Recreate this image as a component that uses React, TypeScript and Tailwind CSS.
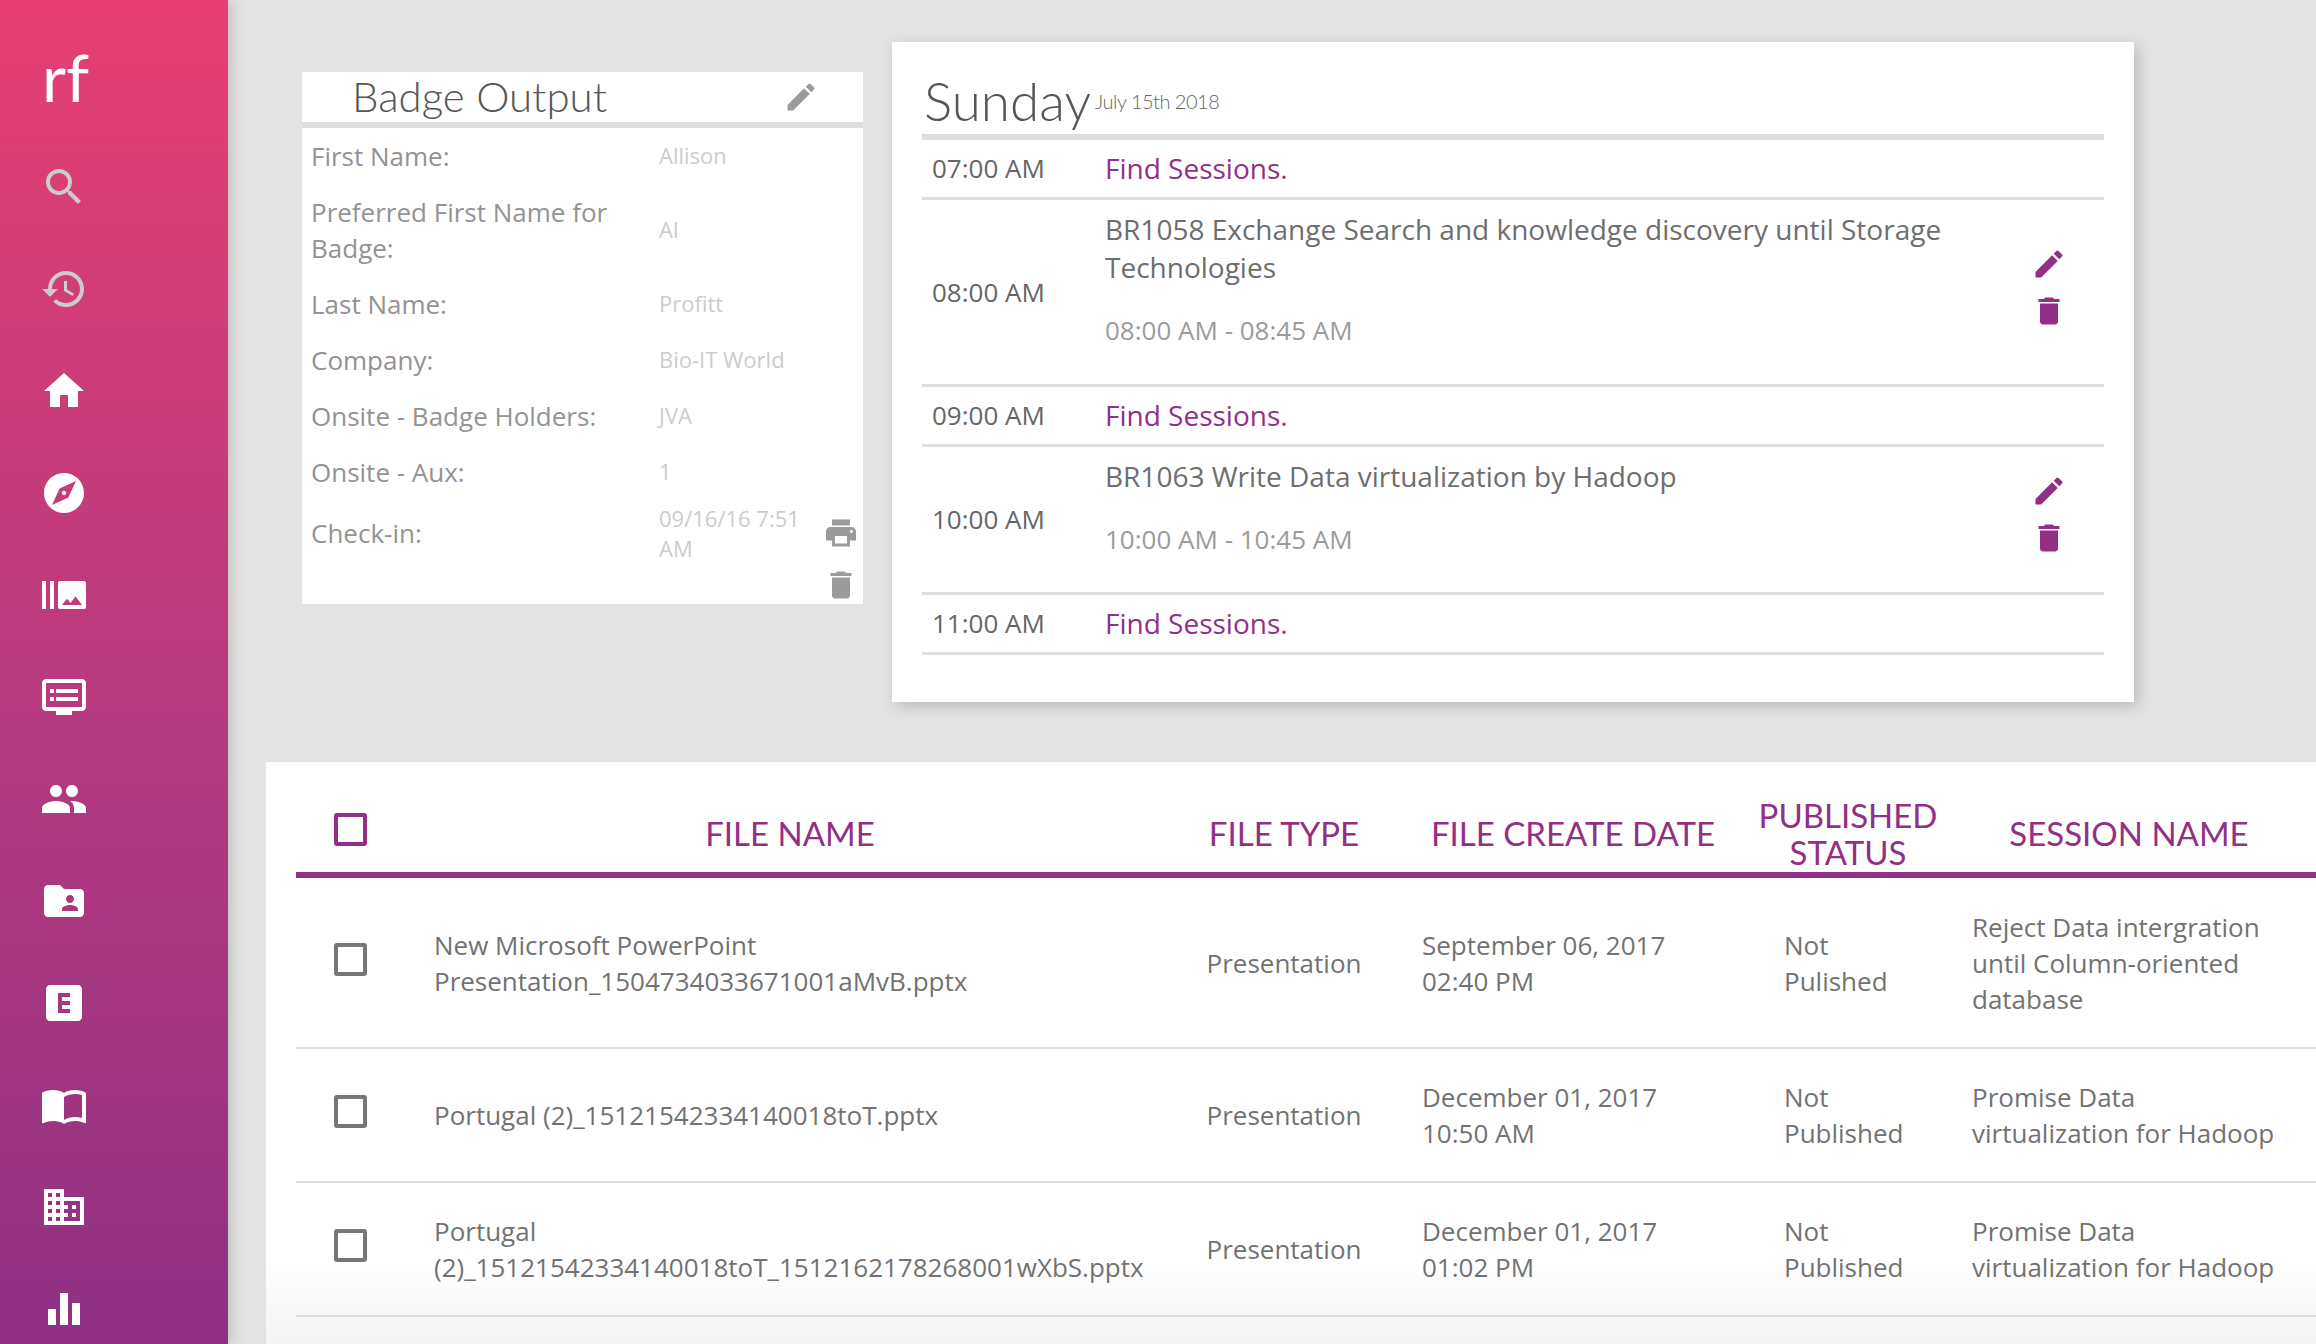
import {
  MdSearch,
  MdHistory,
  MdHome,
  MdExplore,
  MdBurstMode,
  MdDvr,
  MdPeople,
  MdFolderShared,
  MdExplicit,
  MdImportContacts,
  MdDomain,
  MdEqualizer,
  MdEdit,
  MdDelete,
  MdPrint,
} from 'react-icons/md'

const navIcons = [
  { Icon: MdSearch, muted: true },
  { Icon: MdHistory, muted: true },
  { Icon: MdHome },
  { Icon: MdExplore },
  { Icon: MdBurstMode },
  { Icon: MdDvr },
  { Icon: MdPeople },
  { Icon: MdFolderShared },
  { Icon: MdExplicit },
  { Icon: MdImportContacts },
  { Icon: MdDomain },
  { Icon: MdEqualizer },
]

const badgeRows = [
  { label: 'First Name:', value: 'Allison' },
  { label: 'Preferred First Name for Badge:', value: 'Al' },
  { label: 'Last Name:', value: 'Profitt' },
  { label: 'Company:', value: 'Bio-IT World' },
  { label: 'Onsite - Badge Holders:', value: 'JVA' },
  { label: 'Onsite - Aux:', value: '1' },
]

const files = [
  {
    name: 'New Microsoft PowerPoint Presentation_1504734033671001aMvB.pptx',
    date: ['September 06, 2017', '02:40 PM'],
    status: 'Pulished',
    session: 'Reject Data intergration until Column-oriented database',
    height: 'h-[171px]',
  },
  {
    name: 'Portugal (2)_15121542334140018toT.pptx',
    date: ['December 01, 2017', '10:50 AM'],
    status: 'Published',
    session: 'Promise Data virtualization for Hadoop',
    height: 'h-[134px]',
  },
  {
    name: 'Portugal (2)_15121542334140018toT_1512162178268001wXbS.pptx',
    date: ['December 01, 2017', '01:02 PM'],
    status: 'Published',
    session: 'Promise Data virtualization for Hadoop',
    height: 'h-[134px]',
  },
]

const FindRow = ({ time }: { time: string }) => (
  <div className="flex h-[60px] items-center border-b-[3px] border-[#dedede] pb-[2px]">
    <div className="w-[183px] pl-[10px] font-medium text-[#666666]">{time}</div>
    <a className="text-[28px] text-[#932f84]">Find Sessions.</a>
  </div>
)

const SessionRow = ({
  time,
  title,
  range,
  height,
}: {
  time: string
  title: string
  range: string
  height: string
}) => (
  <div className={`flex items-center border-b-[3px] border-[#dedede] ${height}`}>
    <div className="mb-[1px] w-[183px] shrink-0 pl-[10px] font-medium text-[#666666]">{time}</div>
    <div className="flex-1 self-start pt-[10px] text-[#6e6e6e]">
      <div className="text-[28px] leading-[38px]">{title}</div>
      <div className="mt-[26px] text-[#9b9b9b]">{range}</div>
    </div>
    <div className="mb-[10px] flex w-[112px] shrink-0 flex-col items-center gap-[11px] pl-[1px] text-[#932f84]">
      <MdEdit size={36} />
      <MdDelete size={36} />
    </div>
  </div>
)

const App = () => {
  return (
    <div className="flex h-[1344px] overflow-hidden bg-[#e3e3e3] font-['Open_Sans',sans-serif] text-[26px] leading-9">
      <aside className="z-10 flex w-[228px] shrink-0 flex-col bg-gradient-to-b from-[#e63f72] to-[#8f3085] pl-[40px] shadow-[4px_0_12px_rgba(0,0,0,0.15)]">
        <div className="mt-[37px] h-[80px] pl-[2px] font-['Lato',sans-serif] text-[66px] leading-[80px] font-normal text-white">
          rf
        </div>
        <nav className="mt-[46px] flex flex-col gap-[54px]">
          {navIcons.map(({ Icon, muted }, i) => (
            <Icon key={i} size={48} className={muted ? 'text-[#cccccc]' : 'text-white'} />
          ))}
        </nav>
      </aside>

      <main className="min-w-0 flex-1">
        <div className="flex items-start pt-[42px] pl-[74px]">
          <section className="mt-[30px] h-[532px] w-[561px] bg-white">
            <div className="flex h-[50px] items-center pr-[44px] pl-[50px]">
              <h2 className="mb-[2px] flex-1 font-['Lato',sans-serif] text-[42px] font-light text-[#555555]">
                Badge Output
              </h2>
              <MdEdit size={36} className="text-[#9b9b9b]" />
            </div>
            <div className="h-[6px] bg-[#dedede]" />
            {badgeRows.map((r) => (
              <div key={r.label} className="flex items-center py-[10px] pl-[9px]">
                <div className="w-[348px] shrink-0 font-medium text-[#939393]">{r.label}</div>
                <div className="pb-[2px] text-[22px] leading-[32px] text-[#cccccc]">{r.value}</div>
              </div>
            ))}
            <div className="flex items-start pt-[3px] pl-[9px]">
              <div className="mt-[12px] w-[348px] shrink-0 font-medium text-[#939393]">Check-in:</div>
              <div className="w-[164px] shrink-0 text-[22px] leading-[30px] text-[#cccccc]">09/16/16 7:51 AM</div>
              <div className="flex w-[36px] flex-col items-center gap-[16px] pt-[12px] text-[#9b9b9b]">
                <MdPrint size={36} />
                <MdDelete size={36} />
              </div>
            </div>
          </section>

          <section className="ml-[29px] h-[660px] w-[1242px] bg-white px-[30px] shadow-[4px_4px_14px_rgba(0,0,0,0.18)]">
            <div className="flex h-[98px] items-center border-b-[6px] border-[#dedede] pt-[26px] pl-[2px] font-['Lato',sans-serif] font-light">
              <span className="text-[53px] leading-[62px] text-[#555555]">Sunday</span>
              <span className="ml-[4px] text-[20px] tracking-[-0.5px] text-[#666666]">July 15th 2018</span>
            </div>
            <FindRow time="07:00 AM" />
            <SessionRow
              time="08:00 AM"
              title="BR1058 Exchange Search and knowledge discovery until Storage Technologies"
              range="08:00 AM - 08:45 AM"
              height="h-[187px]"
            />
            <FindRow time="09:00 AM" />
            <SessionRow
              time="10:00 AM"
              title="BR1063 Write Data virtualization by Hadoop"
              range="10:00 AM - 10:45 AM"
              height="h-[148px]"
            />
            <FindRow time="11:00 AM" />
          </section>
        </div>

        <section className="mt-[60px] ml-[38px] h-[582px] bg-gradient-to-b from-white from-85% to-[#f4f4f4] pl-[30px]">
          <div className="grid h-[116px] grid-cols-[128px_732px_256px_322px_228px_354px] items-center border-b-[6px] border-[#932f84] pt-[33px] text-center font-['Lato',sans-serif] text-[33px] leading-[37px] text-[#932f84]">
            <div className="flex justify-center">
              <span className="mb-[9px] ml-[-20px] size-[33px] rounded-[3px] border-[4px] border-[#932f84]" />
            </div>
            <div>FILE NAME</div>
            <div>FILE TYPE</div>
            <div>FILE CREATE DATE</div>
            <div>PUBLISHED STATUS</div>
            <div className="pr-5">SESSION NAME</div>
          </div>
          {files.map((f) => (
            <div
              key={f.name}
              className={`grid grid-cols-[128px_732px_256px_322px_228px_354px] items-center border-b-2 border-[#dedede] text-[#727272] ${f.height}`}
            >
              <div className="flex justify-center">
                <span className="mb-[7px] ml-[-20px] size-[33px] rounded-[3px] border-[4px] border-[#777777]" />
              </div>
              <div className="pr-[10px] pl-[10px]">{f.name}</div>
              <div className="text-center">Presentation</div>
              <div className="pl-[10px]">
                {f.date[0]}
                <br />
                {f.date[1]}
              </div>
              <div className="pl-[50px]">
                Not
                <br />
                {f.status}
              </div>
              <div className="pr-[20px] pl-[10px]">{f.session}</div>
            </div>
          ))}
        </section>
      </main>
    </div>
  )
}

export default App
